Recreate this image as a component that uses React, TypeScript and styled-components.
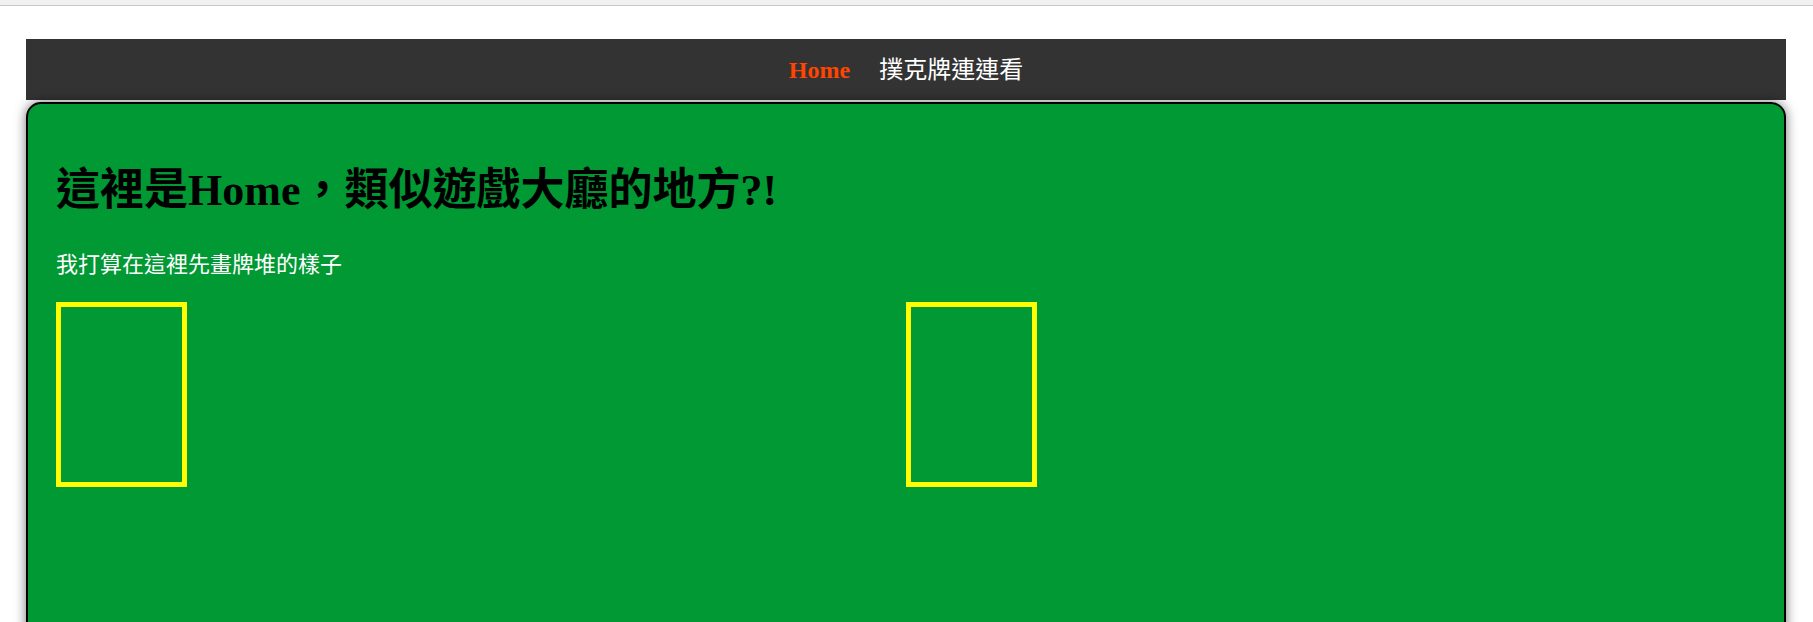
import React from 'react';
import styled, { createGlobalStyle } from 'styled-components';

const GlobalStyle = createGlobalStyle`
  html, body {
    margin: 0;
    padding: 0;
    background: #ffffff;
    overflow: hidden;
  }
  body {
    font-family: "Liberation Serif", "Noto Sans CJK TC", serif;
  }
`;

const TopStrip = styled.div`
  height: 5px;
  background: #f1f1f1;
  border-bottom: 1px solid #c6c6c6;
`;

const Page = styled.div`
  padding: 33px 27px 0 26px;
`;

const NavBar = styled.nav`
  height: 61px;
  background: #333333;
  display: flex;
  align-items: center;
  justify-content: center;
  gap: 29px;
`;

const NavLink = styled.a<{ $active?: boolean }>`
  font-size: 24px;
  line-height: 30px;
  text-decoration: none;
  cursor: pointer;
  color: ${(p) => (p.$active ? '#ff4500' : '#ffffff')};
  font-weight: ${(p) => (p.$active ? 700 : 400)};
`;

const Table = styled.main`
  margin-top: 2px;
  min-height: 620px;
  background: #009933;
  border: 2px solid #000000;
  border-radius: 15px;
  box-shadow: 0 0 12px rgba(0, 0, 0, 0.55);
  padding: 0 28px;
`;

const Title = styled.h1`
  margin: 62px 0 0;
  font-size: 44px;
  line-height: 50px;
  font-weight: 700;
  color: #000000;
`;

const Note = styled.p`
  margin: 34px 0 0;
  font-size: 22px;
  line-height: 30px;
  color: #ffffff;
`;

const Piles = styled.div`
  margin-top: 22px;
  display: grid;
  grid-template-columns: 1fr 1fr;
`;

const CardSlot = styled.div`
  box-sizing: border-box;
  width: 131px;
  height: 185px;
  border: 5px solid #ffff00;
`;

export default function App() {
  return (
    <>
      <GlobalStyle />
      <TopStrip />
      <Page>
        <NavBar>
          <NavLink $active>Home</NavLink>
          <NavLink>撲克牌連連看</NavLink>
        </NavBar>
        <Table>
          <Title>這裡是Home，類似遊戲大廳的地方?!</Title>
          <Note>我打算在這裡先畫牌堆的樣子</Note>
          <Piles>
            <CardSlot />
            <CardSlot />
          </Piles>
        </Table>
      </Page>
    </>
  );
}
